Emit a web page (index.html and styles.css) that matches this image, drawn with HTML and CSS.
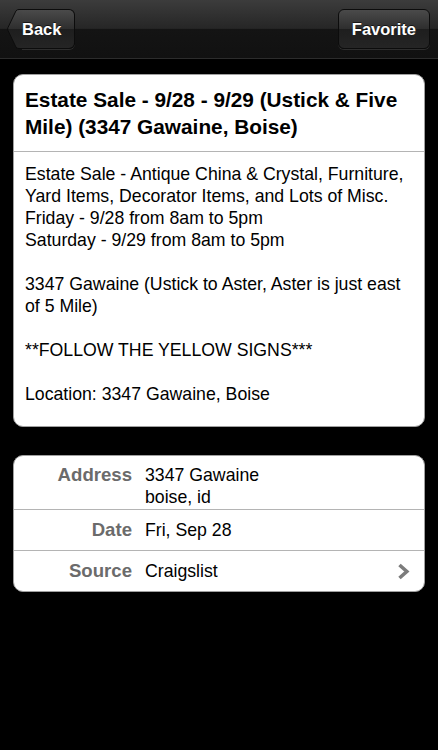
FILE: index.html
```html
<!DOCTYPE html>
<html lang="en">
<head>
    <meta charset="UTF-8">
    <meta name="viewport" content="width=device-width, initial-scale=1.0">
    <title>Estate Sale</title>
    <link rel="stylesheet" href="styles.css">
</head>
<body>
    <div class="navbar">
        <div class="nav-back">
            <svg class="back-arrow" width="16" height="40" viewBox="0 0 16 40">
                <path d="M16 0.5 L12 0.5 Q10 0.5 9 1.8 L1 18.5 Q0.3 20 1 21.5 L9 38.2 Q10 39.5 12 39.5 L16 39.5 Z" fill="url(#btnGrad)" stroke="#0c0c0c" stroke-width="1"/>
                <defs>
                    <linearGradient id="btnGrad" x1="0" y1="0" x2="0" y2="1">
                        <stop offset="0" stop-color="#4a4a4a"/>
                        <stop offset="0.5" stop-color="#2e2e2e"/>
                        <stop offset="0.51" stop-color="#1e1e1e"/>
                        <stop offset="1" stop-color="#252525"/>
                    </linearGradient>
                </defs>
            </svg>
            <span class="nav-button back-label">Back</span>
        </div>
        <span class="nav-button">Favorite</span>
    </div>

    <div class="content">
        <div class="card">
            <div class="card-title">Estate Sale - 9/28 - 9/29 (Ustick &amp; Five Mile) (3347 Gawaine, Boise)</div>
            <div class="card-body">
                Estate Sale - Antique China &amp; Crystal, Furniture, Yard Items, Decorator Items, and Lots of Misc.<br>
                Friday - 9/28 from 8am to 5pm<br>
                Saturday - 9/29 from 8am to 5pm<br>
                <br>
                3347 Gawaine (Ustick to Aster, Aster is just east of 5 Mile)<br>
                <br>
                **FOLLOW THE YELLOW SIGNS***<br>
                <br>
                Location: 3347 Gawaine, Boise
            </div>
        </div>

        <div class="card details">
            <div class="row row-tall">
                <div class="row-label">Address</div>
                <div class="row-value">3347 Gawaine<br>boise, id</div>
            </div>
            <div class="row">
                <div class="row-label">Date</div>
                <div class="row-value">Fri, Sep 28</div>
            </div>
            <div class="row">
                <div class="row-label">Source</div>
                <div class="row-value">Craigslist</div>
                <svg class="chevron" width="13" height="17" viewBox="0 0 13 17">
                    <path d="M2.5 2 L9.8 8.5 L2.5 15" fill="none" stroke="#7c7c7c" stroke-width="3.6"/>
                </svg>
            </div>
        </div>
    </div>
</body>
</html>
```

FILE: styles.css
```css
body {
    margin: 0;
    background-color: #000;
    font-family: "Liberation Sans", Arial, sans-serif;
    width: 438px;
    min-height: 750px;
}
.navbar {
    height: 59px;
    box-sizing: border-box;
    display: flex;
    justify-content: space-between;
    align-items: center;
    padding: 0 8px 0 7px;
    background: linear-gradient(#3c3c3c 0%, #262626 49%, #141414 50%, #111 100%);
    border-bottom: 1px solid #2c2c2c;
}
.nav-back {
    display: flex;
    align-items: center;
    height: 40px;
}
.back-arrow {
    display: block;
    margin-right: -1px;
}
.nav-button {
    height: 40px;
    box-sizing: border-box;
    display: flex;
    align-items: center;
    padding: 0 13px;
    color: #fff;
    font-weight: bold;
    font-size: 16.5px;
    text-shadow: 0 -1px 0 rgba(0,0,0,0.6);
    background: linear-gradient(#4a4a4a 0%, #2e2e2e 50%, #1e1e1e 51%, #252525 100%);
    border: 1px solid #0c0c0c;
    border-radius: 6px;
    box-shadow: 0 1px 0 rgba(255,255,255,0.12);
}
.back-label {
    border-left: none;
    border-radius: 0 6px 6px 0;
    padding: 0 8px 0 0;
    width: 53px;
    justify-content: flex-start;
}
.content {
    padding: 15px 13px 0 13px;
}
.card {
    background: #fff;
    border: 1px solid #a0a0a0;
    border-radius: 10px;
    overflow: hidden;
}
.card-title {
    font-size: 20.8px;
    font-weight: bold;
    line-height: 27px;
    color: #000;
    padding: 11px 11px 11px 11px;
    border-bottom: 1px solid #b4b4b4;
}
.card-body {
    font-size: 17.7px;
    line-height: 22px;
    color: #000;
    padding: 11px 11px 21px 11px;
}
.details {
    margin-top: 28px;
}
.row {
    display: flex;
    align-items: center;
    min-height: 41px;
    box-sizing: border-box;
    padding: 5px 0;
    border-top: 1px solid #b4b4b4;
    font-size: 17.7px;
    line-height: 22px;
}
.row:first-child {
    border-top: none;
}
.row-tall {
    align-items: flex-start;
    padding: 8px 0 1px 0;
}
.row-label {
    width: 118px;
    flex-shrink: 0;
    text-align: right;
    font-weight: bold;
    font-size: 18.6px;
    color: #6b6b6b;
}
.row-value {
    flex: 1;
    margin-left: 13px;
    color: #000;
}
.chevron {
    margin-right: 14px;
}
```
